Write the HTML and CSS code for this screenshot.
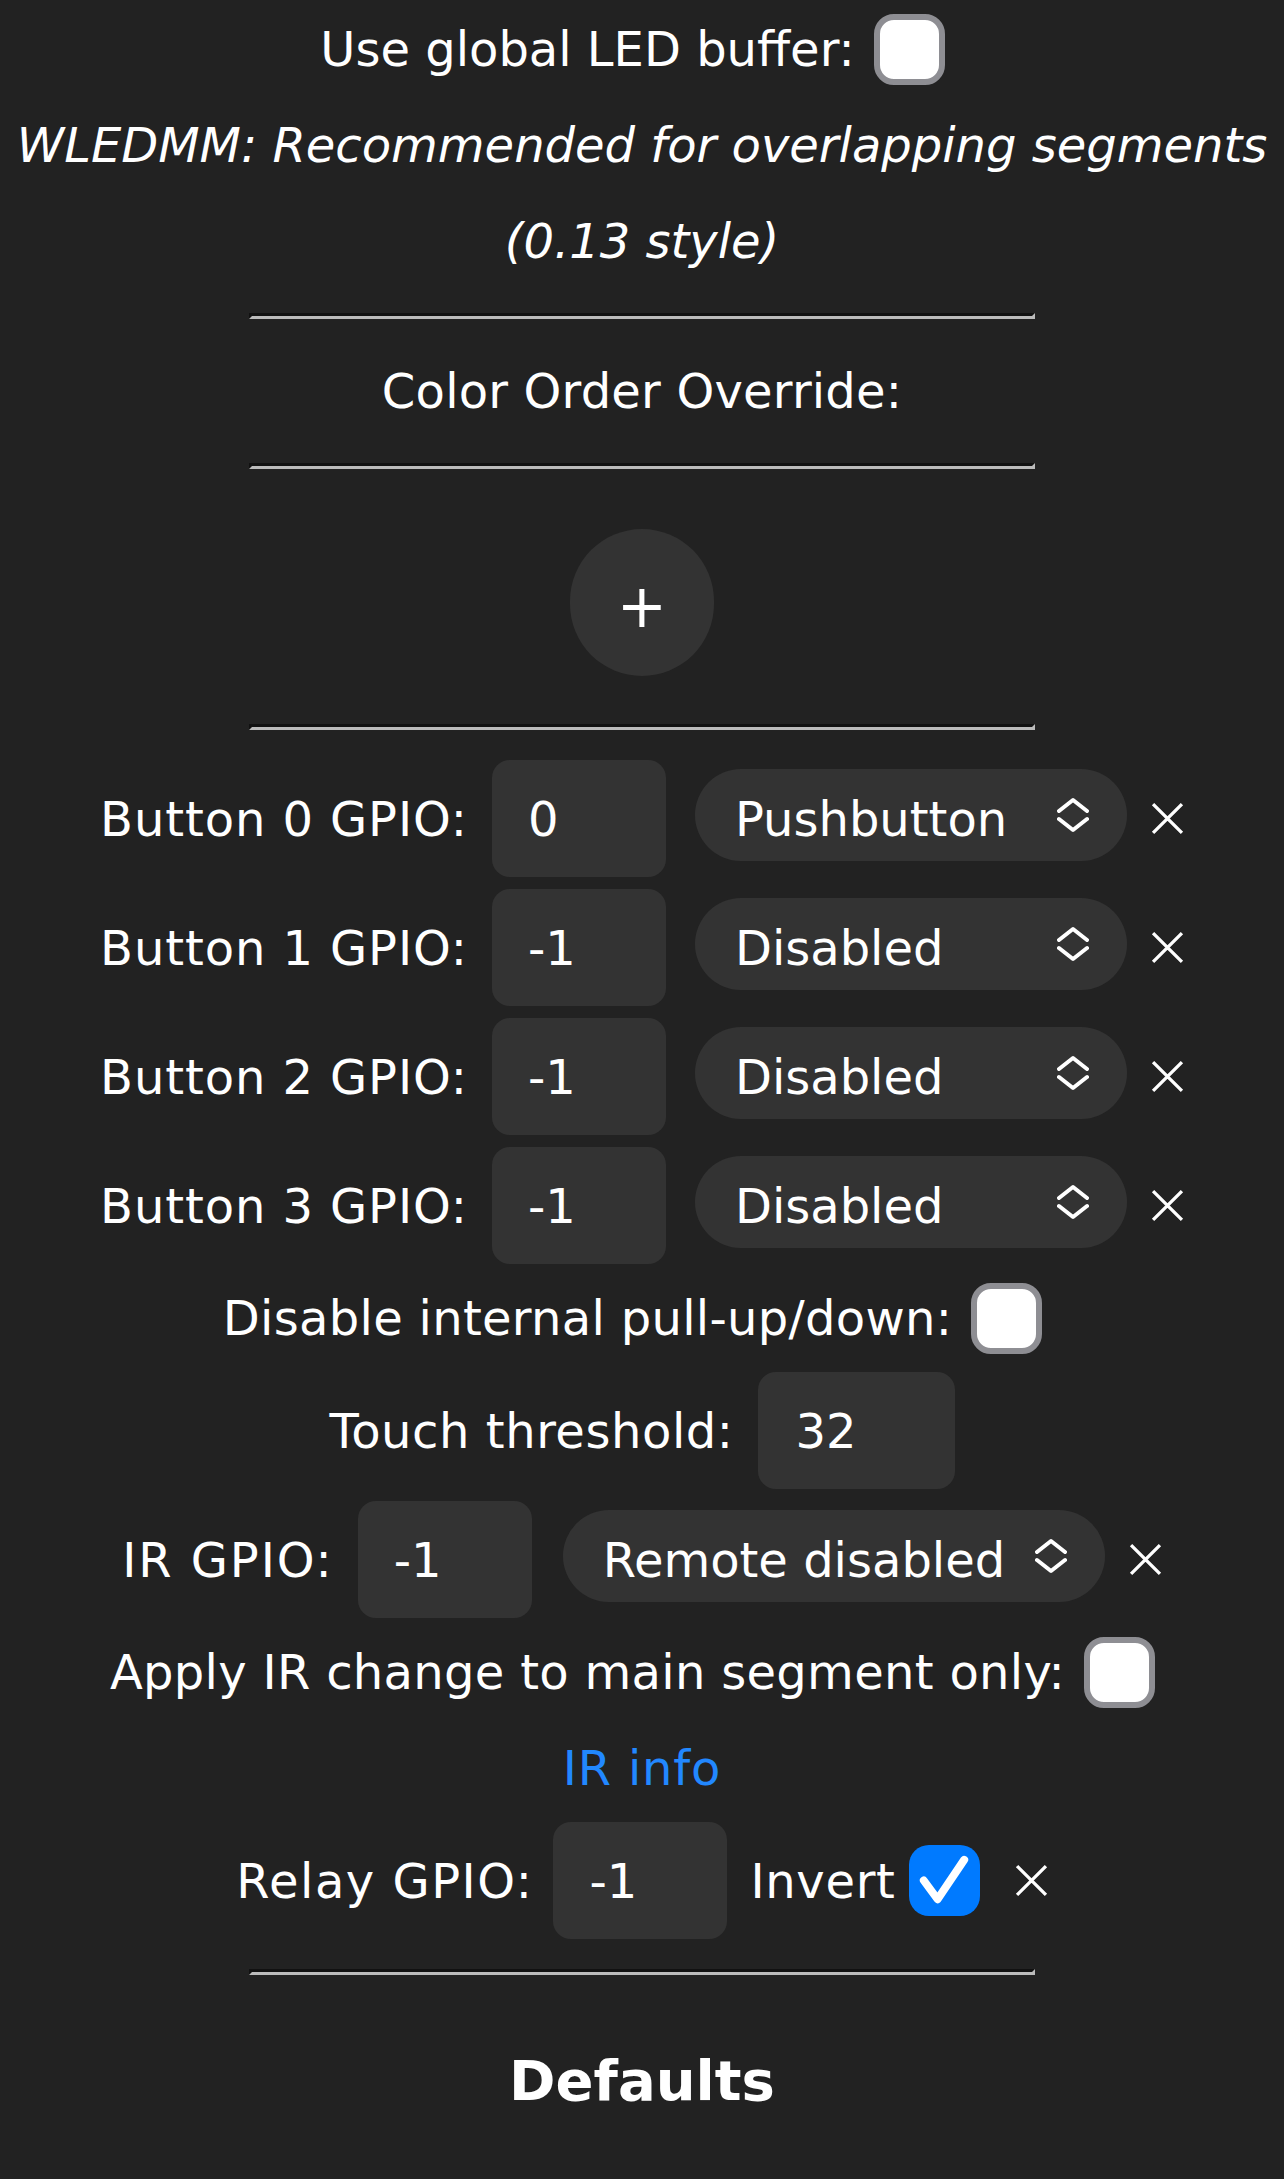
FILE: index.html
```html
<!DOCTYPE html>
<html lang="en">
<head>
<meta charset="utf-8">
<title>LED Settings</title>
<link rel="stylesheet" href="styles.css">
</head>
<body>
<div class="cbrow"><span class="lbl">Use global LED buffer:</span><span class="cb" role="checkbox" aria-checked="false"></span></div>
<p class="note"><i>WLEDMM: Recommended for overlapping segments (0.13 style)</i></p>
<hr>
<p class="line ls-co">Color Order Override:</p>
<hr>
<div class="addwrap"><button type="button" class="add">+</button></div>
<hr>

<div class="row">
  <span class="lbl ls-btn">Button 0 GPIO:</span>
  <input class="num" type="text" value="0">
  <div class="selwrap"><select class="sel sel-btn"><option>Pushbutton</option></select><svg class="chev" viewBox="0 0 32 36" width="32" height="36"><path d="M2 14 L16 3 L30 14 M2 22 L16 33 L30 22"/></svg></div>
  <svg class="x" viewBox="0 0 32 32" width="33" height="33"><path d="M2 2 L30 30 M30 2 L2 30"/></svg>
</div>
<div class="row">
  <span class="lbl ls-btn">Button 1 GPIO:</span>
  <input class="num" type="text" value="-1">
  <div class="selwrap"><select class="sel sel-btn"><option>Disabled</option></select><svg class="chev" viewBox="0 0 32 36" width="32" height="36"><path d="M2 14 L16 3 L30 14 M2 22 L16 33 L30 22"/></svg></div>
  <svg class="x" viewBox="0 0 32 32" width="33" height="33"><path d="M2 2 L30 30 M30 2 L2 30"/></svg>
</div>
<div class="row">
  <span class="lbl ls-btn">Button 2 GPIO:</span>
  <input class="num" type="text" value="-1">
  <div class="selwrap"><select class="sel sel-btn"><option>Disabled</option></select><svg class="chev" viewBox="0 0 32 36" width="32" height="36"><path d="M2 14 L16 3 L30 14 M2 22 L16 33 L30 22"/></svg></div>
  <svg class="x" viewBox="0 0 32 32" width="33" height="33"><path d="M2 2 L30 30 M30 2 L2 30"/></svg>
</div>
<div class="row">
  <span class="lbl ls-btn">Button 3 GPIO:</span>
  <input class="num" type="text" value="-1">
  <div class="selwrap"><select class="sel sel-btn"><option>Disabled</option></select><svg class="chev" viewBox="0 0 32 36" width="32" height="36"><path d="M2 14 L16 3 L30 14 M2 22 L16 33 L30 22"/></svg></div>
  <svg class="x" viewBox="0 0 32 32" width="33" height="33"><path d="M2 2 L30 30 M30 2 L2 30"/></svg>
</div>

<div class="cbrow"><span class="lbl ls-sm">Disable internal pull-up/down:</span><span class="cb" role="checkbox" aria-checked="false"></span></div>

<div class="row">
  <span class="lbl ls-touch">Touch threshold:</span>
  <input class="num num-wide" type="text" value="32">
</div>

<div class="row">
  <span class="lbl ls-ir">IR GPIO:</span>
  <input class="num" type="text" value="-1">
  <div class="selwrap selwrap-ir"><select class="sel sel-ir"><option>Remote disabled</option></select><svg class="chev" viewBox="0 0 32 36" width="32" height="36"><path d="M2 14 L16 3 L30 14 M2 22 L16 33 L30 22"/></svg></div>
  <svg class="x" viewBox="0 0 32 32" width="33" height="33"><path d="M2 2 L30 30 M30 2 L2 30"/></svg>
</div>

<div class="cbrow"><span class="lbl ls-sm">Apply IR change to main segment only:</span><span class="cb" role="checkbox" aria-checked="false"></span></div>

<p class="line"><a class="ls-info" href="#">IR info</a></p>

<div class="row">
  <span class="lbl ls-relay">Relay GPIO:</span>
  <input class="num num-relay" type="text" value="-1">
  <span class="lbl inv">Invert</span>
  <span class="cb on cb-inv" role="checkbox" aria-checked="true"><svg class="tick" viewBox="0 0 72 72" width="71" height="71"><path d="M15 36 L29 55 L56 15"/></svg></span>
  <svg class="x x-relay" viewBox="0 0 32 32" width="33" height="33"><path d="M2 2 L30 30 M30 2 L2 30"/></svg>
</div>

<hr>
<h3>Defaults</h3>
</body>
</html>
```

FILE: styles.css
```css
html, body {
  margin: 0;
}

body {
  background: #222;
  color: #fff;
  font-family: "DejaVu Sans", Verdana, sans-serif;
  font-size: 48px;
  line-height: 96px;
  text-align: center;
  padding-top: 1px;
}

.lbl {
  white-space: nowrap;
}

/* label tracking to match the reference text widths */
.ls-co { letter-spacing: 0.2px; }
.ls-btn { letter-spacing: 0.9px; }
.ls-sm { letter-spacing: 0.3px; }
.ls-touch { letter-spacing: 0.55px; }
.ls-ir { letter-spacing: 1.9px; }
.ls-info { letter-spacing: 0.8px; }
.ls-relay { letter-spacing: 1.5px; }

.cbrow {
  display: flex;
  justify-content: center;
  align-items: center;
  height: 96px;
}

.cb {
  flex: none;
  box-sizing: border-box;
  width: 71px;
  height: 71px;
  margin: 0 19px;
  border: 6px solid #8e8e93;
  border-radius: 20px;
  background: #fff;
  display: flex;
  align-items: center;
  justify-content: center;
  overflow: hidden;
}

.cb.on {
  background: #007aff;
  border: 0;
}

.tick {
  flex: none;
  fill: none;
  stroke: #fff;
  stroke-width: 8;
  stroke-linecap: round;
  stroke-linejoin: round;
}

.note {
  margin: 0;
}

.line {
  margin: 0;
}

a {
  color: #28f;
  text-decoration: none;
}

hr {
  box-sizing: content-box;
  width: 780px;
  height: 0;
  margin: 24px auto;
  border-style: solid;
  border-width: 3px;
  border-color: #111 #bbb #bbb #111;
}

.addwrap {
  padding: 36px 0 24px;
  line-height: 0;
}

.add {
  width: 144px;
  height: 147px;
  padding: 6px 0 0;
  margin: 0;
  border: 0;
  border-radius: 72px;
  background: #333;
  color: #fff;
  font-family: "DejaVu Sans", Verdana, sans-serif;
  font-size: 60px;
  line-height: 1;
}

.row {
  display: flex;
  justify-content: center;
  align-items: center;
  height: 129px;
}

.num {
  flex: none;
  box-sizing: border-box;
  width: 174px;
  height: 117px;
  margin: 6px 0 6px 24px;
  padding: 0 0 0 36px;
  border: 0;
  border-radius: 18px;
  background: #333;
  color: #fff;
  font-family: "DejaVu Sans", Verdana, sans-serif;
  font-size: 48px;
  outline: none;
}

.num-wide {
  width: 197px;
  padding-left: 38px;
}

.num-relay {
  margin-left: 20px;
}

.selwrap {
  position: relative;
  flex: none;
  margin-left: 29px;
  margin-bottom: 7px;
  line-height: 0;
}

.selwrap-ir {
  margin-left: 31px;
}

.sel {
  -webkit-appearance: none;
  appearance: none;
  box-sizing: border-box;
  width: 432px;
  height: 92px;
  margin: 0;
  padding: 7px 0 0 40px;
  border: 0;
  border-radius: 46px;
  background: #333;
  color: #fff;
  font-family: "DejaVu Sans", Verdana, sans-serif;
  font-size: 48px;
  outline: none;
}

.sel-ir {
  width: 542px;
}

.chev {
  position: absolute;
  top: 28px;
  right: 38px;
  fill: none;
  stroke: #fff;
  stroke-width: 4;
  stroke-linecap: round;
  stroke-linejoin: round;
  pointer-events: none;
}

.x {
  flex: none;
  margin-left: 24px;
  fill: none;
  stroke: #fff;
  stroke-width: 3.2;
}

.inv {
  margin-left: 23px;
  letter-spacing: 0.7px;
}

.cb-inv {
  margin: 0 0 0 13px;
}

.x-relay {
  margin-left: 35px;
}

h3 {
  margin: 50px 0;
  font-size: 56px;
  line-height: 112px;
  font-weight: bold;
}
```
